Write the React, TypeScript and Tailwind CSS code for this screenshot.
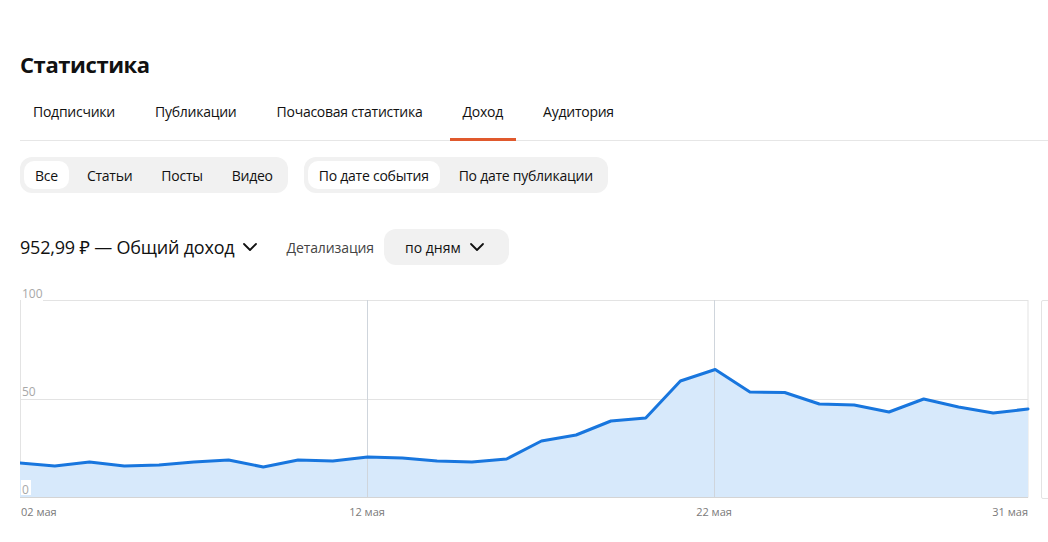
import React from "react";

const ys = [463, 466, 462, 466, 465, 462, 460, 467, 460, 461, 457, 458, 461, 462, 459, 441, 435, 421, 418, 381, 369.5, 392, 392.5, 404, 405, 412, 399, 407, 413, 409];

function Chevron({ className = "" }: { className?: string }) {
  return (
    <svg className={className} width="16" height="16" viewBox="0 0 16 16" fill="none">
      <path d="M2 5l6 6 6-6" stroke="#111" strokeWidth="1.8" strokeLinecap="round" strokeLinejoin="round" />
    </svg>
  );
}

function Chart() {
  const top = 285;
  const W = 1008;
  const pts = ys.map((y, i) => [(i * W) / 29, y - top] as [number, number]);
  const line = pts.map((p, i) => `${i === 0 ? "M" : "L"}${p[0].toFixed(1)},${p[1].toFixed(1)}`).join(" ");
  const area = `${line} L${W},212 L0,212 Z`;
  return (
    <svg width="1016" height="240" viewBox="0 0 1016 240" className="block shrink-0">
      <rect x="0.5" y="15.5" width={W - 0.5} height="196.5" fill="#fff" stroke="#e3e3e3" />
      <line x1="0" y1="114.5" x2={W} y2="114.5" stroke="#e3e3e3" />
      <path d={area} fill="#d7e9fb" />
      <line x1="347.5" y1="15" x2="347.5" y2="212" stroke="#cfd5dc" />
      <line x1="694.5" y1="15" x2="694.5" y2="212" stroke="#cfd5dc" />
      <line x1="0" y1="212.5" x2={W} y2="212.5" stroke="#d4d4d4" />
      <path d={line} fill="none" stroke="#1876de" strokeWidth="3" strokeLinejoin="round" strokeLinecap="round" />
      <rect x="1" y="3" width="22" height="13" fill="#fff" />
      <rect x="1" y="195" width="10" height="15" fill="#fff" />
      <g fontFamily="'Open Sans', sans-serif" fontSize="12" fill="#a8a8a8">
        <text x="2" y="13">100</text>
        <text x="2" y="111">50</text>
        <text x="2" y="209">0</text>
      </g>
      <g fontFamily="'Open Sans', sans-serif" fontSize="11" fill="#7a7a7a">
        <text x="1" y="231">02 мая</text>
        <text x="347" y="231" textAnchor="middle">12 мая</text>
        <text x="694" y="231" textAnchor="middle">22 мая</text>
        <text x={W} y="231" textAnchor="end">31 мая</text>
      </g>
    </svg>
  );
}

export default function App() {
  const tabs = ["Подписчики", "Публикации", "Почасовая статистика", "Доход", "Аудитория"];
  const g1 = ["Все", "Статьи", "Посты", "Видео"];
  const g2 = ["По дате события", "По дате публикации"];
  return (
    <div
      className="w-[1048px] h-[542px] overflow-hidden bg-white text-[#111]"
      style={{ fontFamily: "'Open Sans', 'Noto Sans', sans-serif" }}
    >
      <div className="pl-5 pt-[48px]">
        <h1 className="text-[22px] font-bold leading-[32px] tracking-[-0.4px]">Статистика</h1>
        <div className="mt-[22px] flex gap-[14px] border-b border-[#e6e6e6]">
          {tabs.map((t) => (
            <div key={t} className="relative px-[13px] pb-[18px] text-[14px] leading-[20px] tracking-[-0.25px]">
              {t}
              {t === "Доход" && (
                <div className="absolute left-0 right-0 bottom-[-1px] h-[3px] bg-[#e0592d]" />
              )}
            </div>
          ))}
        </div>
        <div className="mt-4 flex gap-4">
          <div className="flex gap-[7px] rounded-[12px] bg-[#f1f1f1] p-1">
            {g1.map((t, i) => (
              <div
                key={t}
                className={`h-[28px] px-[11px] rounded-[10px] flex items-center text-[14px] tracking-[-0.25px] ${i === 0 ? "bg-white" : ""}`}
              >
                {t}
              </div>
            ))}
          </div>
          <div className="flex gap-[8px] rounded-[12px] bg-[#f1f1f1] p-1">
            {g2.map((t, i) => (
              <div
                key={t}
                className={`h-[28px] px-[11px] rounded-[10px] flex items-center text-[14px] tracking-[-0.25px] ${i === 0 ? "bg-white" : ""}`}
              >
                {t}
              </div>
            ))}
          </div>
        </div>
        <div className="mt-[36px] flex items-center h-[36px]">
          <div className="text-[18px] leading-[24px] tracking-[-0.2px]">952,99 ₽ — Общий доход</div>
          <Chevron className="ml-2" />
          <div className="ml-7 text-[14px] text-[#444] tracking-[-0.1px]">Детализация</div>
          <div className="ml-[10px] h-[36px] rounded-[12px] bg-[#f1f1f1] pl-[21px] pr-[24px] flex items-center gap-2 text-[14px] tracking-[0px]">
            по дням
            <Chevron />
          </div>
        </div>
        <div className="mt-[20px] flex items-start">
          <Chart />
          <div className="mt-[15px] ml-[5px] w-[200px] h-[199px] shrink-0 border border-[#e3e3e3] rounded-[2px]" />
        </div>
      </div>
    </div>
  );
}
